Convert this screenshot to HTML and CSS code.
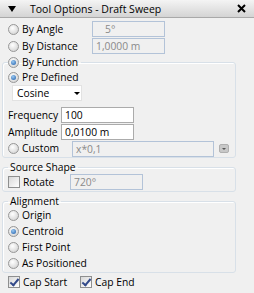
FILE: index.html
```html
<!DOCTYPE html>
<html lang="en">
<head>
    <meta charset="UTF-8">
    <title>Tool Options - Draft Sweep</title>
    <link rel="stylesheet" href="styles.css">
</head>
<body>
<div class="panel">
    <div class="titlebar">
        <span class="collapse"></span>
        <span class="title">Tool Options - Draft Sweep</span>
        <svg class="close" width="9" height="9" viewBox="0 0 9 9">
            <path d="M1 1 L8 8 M8 1 L1 8" stroke="#000" stroke-width="2"/>
        </svg>
    </div>

    <div class="content">
        <div class="row">
            <span class="radio"></span><span class="label w-top">By Angle</span>
            <input class="field off angle" value="5°" disabled>
        </div>
        <div class="row">
            <span class="radio"></span><span class="label w-top">By Distance</span>
            <input class="field off" value="1,0000 m" disabled>
        </div>

        <fieldset class="group func">
            <legend><span class="radio on"></span><span class="label">By Function</span></legend>
            <div class="row inner">
                <span class="radio on"></span><span class="label">Pre Defined</span>
            </div>
            <div class="dropdown">Cosine<span class="arrow"></span></div>
            <div class="row inner freq">
                <span class="caption">Frequency</span>
                <input class="field" value="100">
            </div>
            <div class="row inner amp">
                <span class="caption">Amplitude</span>
                <input class="field" value="0,0100 m">
            </div>
            <div class="row inner">
                <span class="radio"></span><span class="label w-custom">Custom</span>
                <input class="field off custom" value="x*0,1" disabled>
                <span class="mini"></span>
            </div>
        </fieldset>

        <fieldset class="group">
            <legend class="text">Source Shape</legend>
            <div class="row inner">
                <span class="check"></span><span class="label w-rotate">Rotate</span>
                <input class="field off" value="720°" disabled>
            </div>
        </fieldset>

        <fieldset class="group align">
            <legend class="text">Alignment</legend>
            <div class="row inner first"><span class="radio"></span><span class="label">Origin</span></div>
            <div class="row inner"><span class="radio on"></span><span class="label">Centroid</span></div>
            <div class="row inner"><span class="radio"></span><span class="label">First Point</span></div>
            <div class="row inner"><span class="radio"></span><span class="label">As Positioned</span></div>
        </fieldset>

        <div class="row caps">
            <span class="check on"></span><span class="label w-cap">Cap Start</span>
            <span class="check on"></span><span class="label">Cap End</span>
        </div>
    </div>
</div>
</body>
</html>
```

FILE: styles.css
```css
body {
    margin: 0;
    background-color: #f0f0f0;
    font-family: 'Open Sans', sans-serif;
    font-size: 10.3px;
    color: #000;
}

.panel {
    width: 254px;
    height: 293px;
    overflow: hidden;
}

/* title bar */
.titlebar {
    height: 17px;
    display: flex;
    align-items: center;
    background: linear-gradient(#f4f4f4, #d4d4d4);
    border-bottom: 1px solid #a9a9a9;
}

.collapse {
    margin-left: 8px;
    width: 0;
    height: 0;
    border-left: 4px solid transparent;
    border-right: 4px solid transparent;
    border-top: 6px solid #000;
}

.title {
    margin-left: 14px;
    font-size: 10.5px;
    flex: 1;
}

.close {
    margin-right: 8px;
}

/* body */
.content {
    padding: 3px 0 0 2px;
}

.row {
    height: 16px;
    display: flex;
    align-items: center;
    padding-left: 6px;
}

.row + .row {
    margin-top: 1px;
}

.row.inner {
    padding-left: 0;
    margin-top: 0;
}

.label {
    margin-left: 3px;
}

.w-top {
    width: 70px;
}

.w-custom {
    width: 50px;
}

.w-rotate {
    width: 47px;
}

.w-cap {
    width: 57px;
}

.caption {
    width: 53px;
}

.radio {
    width: 11px;
    height: 11px;
    border-radius: 50%;
    border: 1px solid #979797;
    background: radial-gradient(circle at 40% 35%, #ffffff, #e0e0e0 60%, #c9c9c9);
    box-sizing: border-box;
    position: relative;
    flex: none;
}

.radio.on::after {
    content: '';
    position: absolute;
    left: 2px;
    top: 2px;
    width: 5px;
    height: 5px;
    border-radius: 50%;
    background: radial-gradient(circle at 40% 35%, #9ccaf2, #1b5aa8);
}

.check {
    width: 12px;
    height: 12px;
    border: 1px solid #8e8f8f;
    background: linear-gradient(135deg, #d8d8d8, #ffffff);
    box-sizing: border-box;
    position: relative;
    flex: none;
}

.check.on::after {
    content: '';
    position: absolute;
    left: 3px;
    top: 0px;
    width: 3px;
    height: 7px;
    border-right: 2px solid #334a8a;
    border-bottom: 2px solid #334a8a;
    transform: rotate(40deg);
}

.field {
    width: 73px;
    height: 16px;
    box-sizing: border-box;
    border: 1px solid #ababab;
    background: #fff;
    font: inherit;
    color: #000;
    padding: 0 3px;
    outline: none;
}

.field.off {
    background: #f0f0f0;
    border-color: #b3c3d8;
    color: #8a8a8a;
}

.angle {
    padding-left: 12px;
}

.custom {
    width: 142px;
    margin-top: 1px;
}

.mini {
    margin-left: 5px;
    width: 10px;
    height: 9px;
    border-radius: 2px;
    background: #c8c8c8;
    border: 1px solid #b0b0b0;
    box-sizing: border-box;
    position: relative;
}

.mini::after {
    content: '';
    position: absolute;
    left: 2px;
    top: 3px;
    border-left: 2px solid transparent;
    border-right: 2px solid transparent;
    border-top: 2px solid #555;
}

/* group boxes */
.group {
    margin: 2px 0 0 0;
    width: 234px;
    box-sizing: border-box;
    border: 1px solid #d8e0e8;
    border-radius: 3px;
    padding: 0 5px 1px 5px;
    box-shadow: inset 1px 1px 0 #fff;
}

.group legend {
    display: flex;
    align-items: center;
    height: 14px;
    padding: 0 3px 0 0;
}

.group legend.text {
    padding: 0 2px;
}

.group.func {
    margin-top: 1px;
}

.dropdown {
    margin-left: 4px;
    width: 70px;
    height: 16px;
    box-sizing: border-box;
    background: #fff;
    border: 1px solid #e2e2e2;
    display: flex;
    align-items: center;
    padding-left: 4px;
    position: relative;
}

.arrow {
    position: absolute;
    left: 61px;
    top: 6px;
    border-left: 3px solid transparent;
    border-right: 3px solid transparent;
    border-top: 3px solid #000;
}

.row.freq {
    margin-top: 6px;
}

.row.amp {
    margin-top: 1px;
}

.row.first {
    margin-top: -1px;
}

.row.caps {
    margin-top: 1px;
}
```
